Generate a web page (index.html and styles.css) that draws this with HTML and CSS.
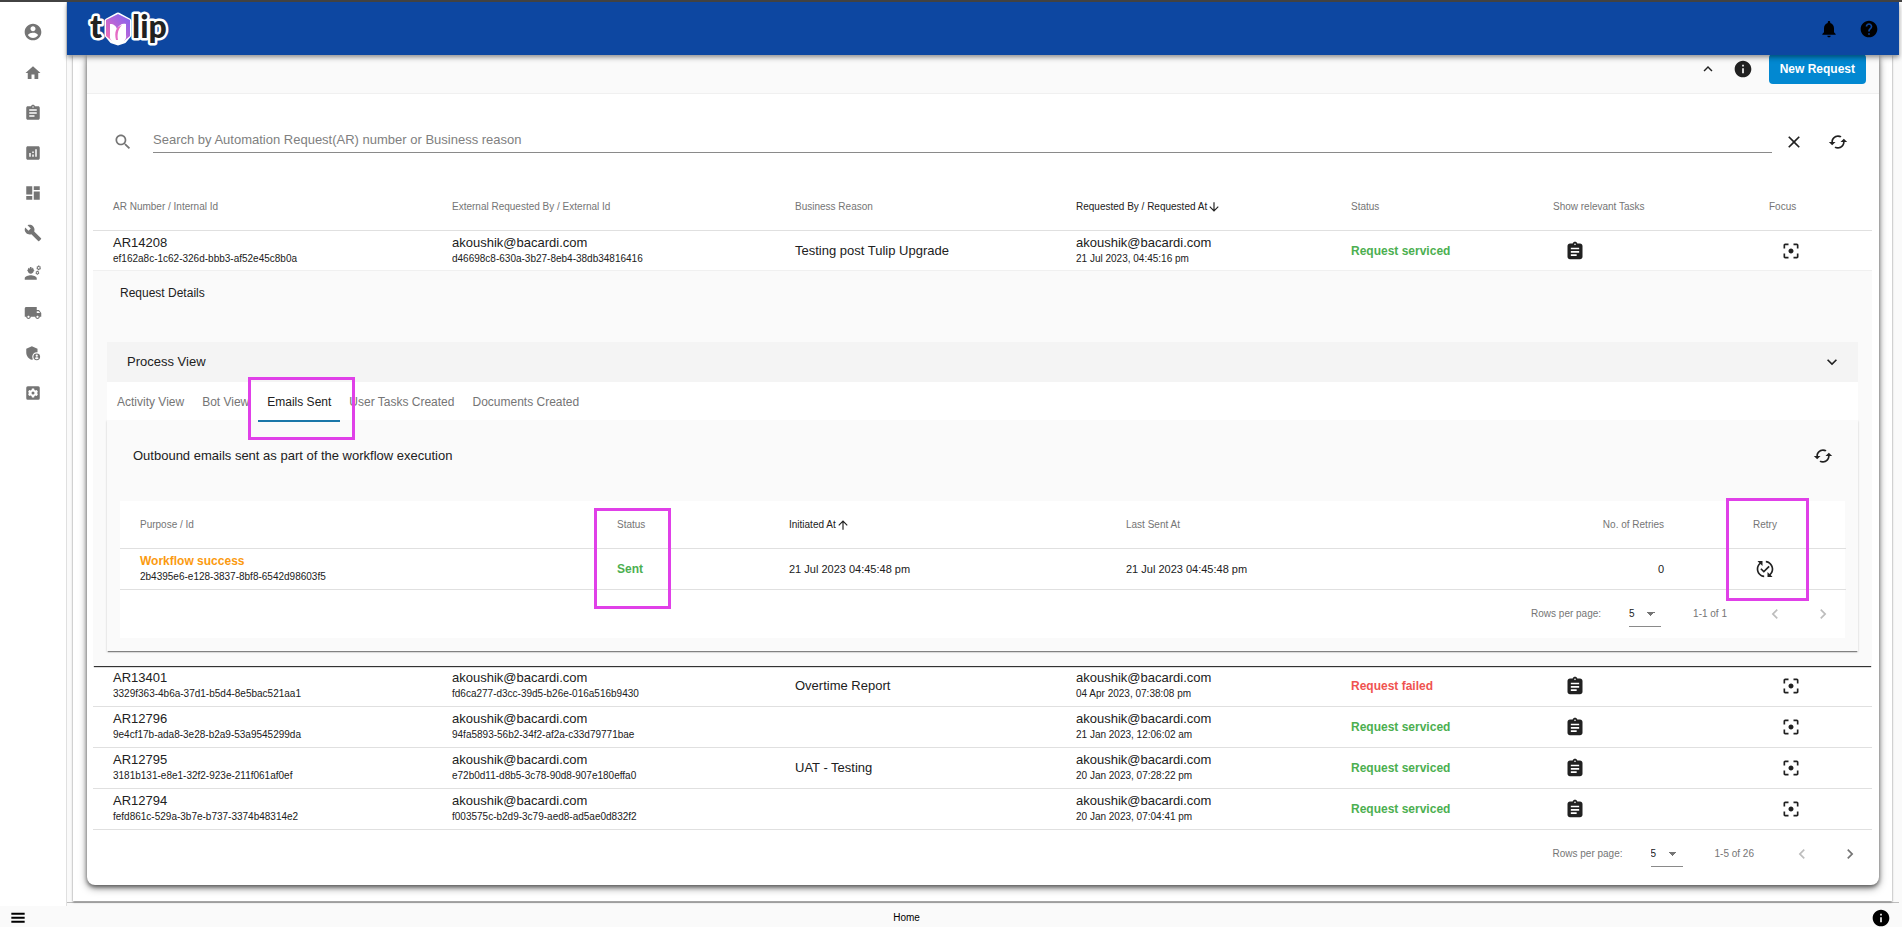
FILE: index.html
```html
<!DOCTYPE html>
<html lang="en">
<head>
    <meta charset="UTF-8">
    <meta name="viewport" content="width=device-width, initial-scale=1.0">
    <title>Tulip - Home</title>
    <link rel="stylesheet" href="styles.css">
</head>
<body>
    <svg class="sprite" aria-hidden="true">
        <symbol id="i-account" viewBox="0 0 24 24"><path d="M12 2C6.48 2 2 6.48 2 12s4.48 10 10 10 10-4.480 10-10S17.520 2 12 2zm0 3c1.660 0 3 1.340 3 3s-1.340 3-3 3-3-1.340-3-3 1.340-3 3-3zm0 14.200c-2.500 0-4.710-1.280-6-3.220.030-1.990 4-3.080 6-3.080 1.990 0 5.970 1.090 6 3.080-1.290 1.940-3.500 3.220-6 3.220z"/></symbol>
        <symbol id="i-home" viewBox="0 0 24 24"><path d="M10 20v-6h4v6h5v-8h3L12 3 2 12h3v8z"/></symbol>
        <symbol id="i-clipboard" viewBox="0 0 24 24"><path d="M19 3h-4.180C14.400 1.840 13.300 1 12 1s-2.400.840-2.820 2H5c-1.100 0-2 .9-2 2v14c0 1.100.9 2 2 2h14c1.100 0 2-.9 2-2V5c0-1.100-.9-2-2-2zm-7 0c.55 0 1 .45 1 1s-.45 1-1 1-1-.45-1-1 .45-1 1-1zm2 14H7v-2h7v2zm3-4H7v-2h10v2zm0-4H7V7h10v2z"/></symbol>
        <symbol id="i-tasks" viewBox="0 0 24 24"><path d="M18 3h-3.180C14.400 1.840 13.300 1 12 1s-2.400.840-2.820 2H6C4.300 3 3 4.300 3 6v13c0 1.700 1.300 3 3 3h12c1.700 0 3-1.300 3-3V6c0-1.700-1.300-3-3-3zm-6 0c.55 0 1 .45 1 1s-.45 1-1 1-1-.45-1-1 .45-1 1-1zm2 15H7v-2h7v2zm3-4H7v-2h10v2zm0-4H7V8h10v2z"/></symbol>
        <symbol id="i-analytics" viewBox="0 0 24 24"><path d="M19 3H5c-1.100 0-2 .9-2 2v14c0 1.100.9 2 2 2h14c1.100 0 2-.9 2-2V5c0-1.100-.9-2-2-2zM9 17H7v-5h2v5zm4 0h-2v-3h2v3zm0-5h-2v-2h2v2zm4 5h-2V7h2v10z"/></symbol>
        <symbol id="i-dashboard" viewBox="0 0 24 24"><path d="M3 14h8V3H3v11zm0 7h8v-5H3v5zm10 0h8V10h-8v11zm0-18v5h8V3h-8z"/></symbol>
        <symbol id="i-wrench" viewBox="0 0 24 24"><path d="M22.700 19l-9.100-9.100c.9-2.300.4-5-1.500-6.900-2-2-5-2.400-7.400-1.300L9 6 6 9 1.600 4.700C.4 7.100.9 10.100 2.900 12.100c1.900 1.900 4.600 2.400 6.900 1.500l9.100 9.100c.4.4 1 .4 1.400 0l2.300-2.300c.5-.4.5-1.100.1-1.400z"/></symbol>
        <symbol id="i-engineer" viewBox="0 0 24 24"><path d="M9 15c-2.670 0-8 1.340-8 4v2h16v-2c0-2.660-5.330-4-8-4zM4.740 9H5c0 2.210 1.790 4 4 4s4-1.790 4-4h.26c.27 0 .49-.22.49-.49v-.02c0-.27-.22-.49-.49-.49H13c0-1.480-.81-2.750-2-3.450v.95c0 .28-.22.5-.5.5s-.5-.22-.5-.5V4.140C9.680 4.060 9.350 4 9 4s-.68.060-1 .140V5.500c0 .28-.22.5-.5.5S7 5.780 7 5.500v-.95C5.810 5.250 5 6.520 5 8h-.26c-.27 0-.49.22-.49.49v.03c0 .26.22.48.49.48z"/><path fill-rule="evenodd" d="M18.800 2h1.600l.3 1.200 1.100-.3.8 1.400-.9.800.9.900-.8 1.300-1.100-.3-.3 1.300h-1.600l-.3-1.300-1.100.3-.8-1.300.9-.9-.9-.8.800-1.400 1.100.3zm.8 1.900a1.250 1.250 0 1 0 0 2.500 1.250 1.250 0 0 0 0-2.500zM17.200 9h1.400l.2 1 .9-.3.700 1.200-.7.700.7.700-.7 1.200-.9-.3-.2 1h-1.400l-.2-1-.9.300-.7-1.200.7-.7-.7-.7.700-1.200.9.300zm.7 1.700a1 1 0 1 0 0 2 1 1 0 0 0 0-2z"/></symbol>
        <symbol id="i-truck" viewBox="0 0 24 24"><path d="M20 8h-3V4H3c-1.100 0-2 .9-2 2v11h2c0 1.660 1.340 3 3 3s3-1.340 3-3h6c0 1.660 1.340 3 3 3s3-1.340 3-3h2v-5l-3-4zM6 18.500c-.83 0-1.500-.67-1.500-1.500s.67-1.500 1.500-1.500 1.500.67 1.500 1.500-.67 1.500-1.500 1.500zm13.500-9l1.960 2.500H17V9.500h2.500zm-1.500 9c-.83 0-1.500-.67-1.500-1.500s.67-1.500 1.500-1.500 1.500.67 1.500 1.500-.67 1.500-1.500 1.500z"/></symbol>
        <symbol id="i-shield" viewBox="0 0 24 24"><path d="M17 11c.34 0 .67.040 1 .09V6.270L10.500 3 3 6.270v4.910c0 4.540 3.200 8.790 7.500 9.820.55-.13 1.080-.32 1.600-.55-.69-.98-1.100-2.170-1.100-3.450 0-3.310 2.690-6 6-6z"/><path fill-rule="evenodd" d="M17 12.500a4.500 4.500 0 1 0 0 9 4.500 4.500 0 0 0 0-9zm0 1.500a1.500 1.500 0 1 1 0 3 1.500 1.500 0 0 1 0-3zm0 6.200c-1 0-1.900-.5-2.500-1.300.1-.8 1.700-1.200 2.500-1.200s2.400.4 2.500 1.200c-.6.8-1.500 1.300-2.500 1.300z"/></symbol>
        <symbol id="i-settings" viewBox="0 0 24 24"><path fill-rule="evenodd" d="M5 3h14a2 2 0 0 1 2 2v14a2 2 0 0 1-2 2H5a2 2 0 0 1-2-2V5a2 2 0 0 1 2-2zm5.500 3-.4 1.900-1.300.8-1.900-.6-1.500 2.600 1.500 1.300-1.500 1.300 1.500 2.600 1.900-.6 1.300.8.400 1.900h3l.4-1.900 1.300-.8 1.900.6 1.500-2.600-1.500-1.300 1.500-1.300-1.500-2.600-1.900.6-1.300-.8-.4-1.900zM12 10a2 2 0 1 1 0 4 2 2 0 0 1 0-4z"/></symbol>
        <symbol id="i-bell" viewBox="0 0 24 24"><path d="M12 22c1.100 0 2-.9 2-2h-4c0 1.100.89 2 2 2zm6-6v-5c0-3.070-1.640-5.640-4.500-6.320V4c0-.83-.67-1.500-1.500-1.500s-1.500.67-1.500 1.500v.68C7.630 5.360 6 7.920 6 11v5l-2 2v1h16v-1l-2-2z"/></symbol>
        <symbol id="i-help" viewBox="0 0 24 24"><path d="M12 2C6.480 2 2 6.480 2 12s4.480 10 10 10 10-4.480 10-10S17.520 2 12 2zm1 17h-2v-2h2v2zm2.070-7.750l-.9.920C13.450 12.900 13 13.500 13 15h-2v-.5c0-1.100.45-2.100 1.170-2.830l1.240-1.260c.37-.36.59-.86.59-1.410 0-1.100-.9-2-2-2s-2 .9-2 2H8c0-2.210 1.790-4 4-4s4 1.790 4 4c0 .88-.36 1.680-.93 2.250z"/></symbol>
        <symbol id="i-info" viewBox="0 0 24 24"><path d="M12 2C6.480 2 2 6.480 2 12s4.480 10 10 10 10-4.480 10-10S17.520 2 12 2zm1 15h-2v-6h2v6zm0-8h-2V7h2v2z"/></symbol>
        <symbol id="i-up" viewBox="0 0 24 24"><path d="M12 8l-6 6 1.410 1.410L12 10.830l4.590 4.580L18 14z"/></symbol>
        <symbol id="i-down" viewBox="0 0 24 24"><path d="M16.590 8.590L12 13.170 7.410 8.590 6 10l6 6 6-6z"/></symbol>
        <symbol id="i-left" viewBox="0 0 24 24"><path d="M15.410 7.410L14 6l-6 6 6 6 1.410-1.410L10.830 12z"/></symbol>
        <symbol id="i-right" viewBox="0 0 24 24"><path d="M10 6L8.590 7.410 13.170 12l-4.580 4.590L10 18l6-6z"/></symbol>
        <symbol id="i-search" viewBox="0 0 24 24"><path d="M15.500 14h-.79l-.28-.27C15.410 12.590 16 11.110 16 9.500 16 5.910 13.090 3 9.500 3S3 5.910 3 9.500 5.910 16 9.500 16c1.610 0 3.090-.59 4.230-1.570l.27.28v.79l5 4.990L20.490 19l-4.990-5zm-6 0C7.010 14 5 11.990 5 9.500S7.010 5 9.500 5 14 7.010 14 9.500 11.990 14 9.500 14z"/></symbol>
        <symbol id="i-close" viewBox="0 0 24 24"><path d="M19 6.410L17.590 5 12 10.590 6.410 5 5 6.410 10.590 12 5 17.590 6.410 19 12 13.410 17.590 19 19 17.590 13.410 12z"/></symbol>
        <symbol id="i-cached" viewBox="0 0 24 24"><path d="M19 8l-4 4h3c0 3.310-2.690 6-6 6-1.010 0-1.970-.25-2.800-.7l-1.460 1.460C8.970 19.540 10.430 20 12 20c4.420 0 8-3.580 8-8h3l-4-4zM6 12c0-3.310 2.690-6 6-6 1.010 0 1.970.25 2.800.7l1.460-1.460C15.030 4.460 13.570 4 12 4c-4.420 0-8 3.580-8 8H1l4 4 4-4H6z"/></symbol>
        <symbol id="i-focus" viewBox="0 0 24 24"><path d="M5 15H3v4c0 1.100.9 2 2 2h4v-2H5v-4zM5 5h4V3H5c-1.100 0-2 .9-2 2v4h2V5zm14-2h-4v2h4v4h2V5c0-1.100-.9-2-2-2zm0 16h-4v2h4c1.100 0 2-.9 2-2v-4h-2v4zM12 9c-1.660 0-3 1.340-3 3s1.340 3 3 3 3-1.340 3-3-1.340-3-3-3z"/></symbol>
        <symbol id="i-retry" viewBox="0 0 24 24"><path d="M17.660 9.530l-7.070 7.070-4.240-4.240 1.410-1.410 2.830 2.830 5.660-5.660 1.410 1.410zM4 12c0-2.330 1.020-4.420 2.620-5.880L9 8.500v-6H3l2.200 2.200C3.240 6.520 2 9.110 2 12c0 5.190 3.950 9.450 9 9.950v-2.020c-3.940-.49-7-3.860-7-7.930zm18 0c0-5.190-3.950-9.450-9-9.950v2.020c3.940.49 7 3.860 7 7.930 0 2.330-1.020 4.420-2.620 5.880L15 15.500v6h6l-2.200-2.200c1.960-1.820 3.200-4.410 3.200-7.300z"/></symbol>
        <symbol id="i-arrow-down" viewBox="0 0 24 24"><path d="M20 12l-1.410-1.410L13 16.170V4h-2v12.170l-5.580-5.590L4 12l8 8 8-8z"/></symbol>
        <symbol id="i-arrow-up" viewBox="0 0 24 24"><path d="M4 12l1.410 1.410L11 7.830V20h2V7.830l5.580 5.590L20 12l-8-8-8 8z"/></symbol>
        <symbol id="i-menu" viewBox="0 0 24 24"><path d="M2 19h20v-3H2v3zm0-6h20v-3H2v3zm0-9v3h20V4H2z"/></symbol>
    </svg>

    <div class="layout">
        <nav class="sidebar" aria-label="Main">
            <a href="#" aria-label="Account"><svg class="icon icon-lg"><use href="#i-account"/></svg></a>
            <a href="#" aria-label="Home"><svg class="icon"><use href="#i-home"/></svg></a>
            <a href="#" aria-label="Requests"><svg class="icon"><use href="#i-clipboard"/></svg></a>
            <a href="#" aria-label="Analytics"><svg class="icon"><use href="#i-analytics"/></svg></a>
            <a href="#" aria-label="Dashboard"><svg class="icon"><use href="#i-dashboard"/></svg></a>
            <a href="#" aria-label="Tools"><svg class="icon"><use href="#i-wrench"/></svg></a>
            <a href="#" aria-label="Engineering"><svg class="icon"><use href="#i-engineer"/></svg></a>
            <a href="#" aria-label="Shipping"><svg class="icon"><use href="#i-truck"/></svg></a>
            <a href="#" aria-label="Administration"><svg class="icon"><use href="#i-shield"/></svg></a>
            <a href="#" aria-label="Settings"><svg class="icon"><use href="#i-settings"/></svg></a>
        </nav>

        <div class="main">
            <header class="topbar">
                <a href="#" class="logo" aria-label="Tulip">
                    <svg viewBox="0 0 90 50" width="90" height="50">
                        <defs>
                            <linearGradient id="petal" x1="0" y1="1" x2="1" y2="0">
                                <stop offset="0" stop-color="#ff6fb0"/>
                                <stop offset="0.5" stop-color="#b565d8"/>
                                <stop offset="1" stop-color="#7d63f2"/>
                            </linearGradient>
                        </defs>
                        <g class="logo-text">
                            <text x="3" y="34">t</text>
                            <text x="45" y="34">lip</text>
                        </g>
                        <path d="M31 11l11 6v14l-5 6-6 2-6-2-5-6V17z" fill="#fff" stroke="#fff" stroke-width="5" stroke-linejoin="round"/>
                        <path d="M31 10l12 6v16l-6 5H25l-6-5V16z" fill="url(#petal)"/>
                        <path d="M23 20c4 0 6 2 7 5 2-4 5-6 9-5v11c1 5-3 8-8 9-5-1-9-4-8-9z" fill="#fff"/>
                        <path d="M29 36c-2-8 0-13 6-15-4 4-5 9-4 15z" fill="#e56bc4"/>
                    </svg>
                </a>
                <div class="topbar-actions">
                    <button class="icon-btn" aria-label="Notifications"><svg class="icon icon-lg"><use href="#i-bell"/></svg></button>
                    <button class="icon-btn" aria-label="Help"><svg class="icon icon-lg"><use href="#i-help"/></svg></button>
                </div>
            </header>

            <div class="page">
                <div class="page-inner">
                    <section class="card">
                        <div class="card-header">
                            <button class="icon-btn" aria-label="Collapse"><svg class="icon"><use href="#i-up"/></svg></button>
                            <button class="icon-btn" aria-label="Information"><svg class="icon icon-lg"><use href="#i-info"/></svg></button>
                            <button class="new-request">New Request</button>
                        </div>

                        <div class="search">
                            <label for="search-input" aria-label="Search"><svg class="icon icon-lg"><use href="#i-search"/></svg></label>
                            <input type="text" id="search-input" placeholder="Search by Automation Request(AR) number or Business reason">
                            <button class="icon-btn" aria-label="Clear"><svg class="icon icon-lg"><use href="#i-close"/></svg></button>
                            <button class="icon-btn refresh" aria-label="Refresh"><svg class="icon icon-lg"><use href="#i-cached"/></svg></button>
                        </div>

                        <table class="requests">
                            <colgroup>
                                <col class="c-ar"><col class="c-ext"><col class="c-reason"><col class="c-by"><col class="c-status"><col class="c-tasks"><col class="c-focus">
                            </colgroup>
                            <thead>
                                <tr>
                                    <th>AR Number / Internal Id</th>
                                    <th>External Requested By / External Id</th>
                                    <th>Business Reason</th>
                                    <th class="sorted">Requested By / Requested At<svg class="icon icon-sort"><use href="#i-arrow-down"/></svg></th>
                                    <th>Status</th>
                                    <th>Show relevant Tasks</th>
                                    <th>Focus</th>
                                </tr>
                            </thead>
                            <tbody>
                                <tr class="expanded">
                                    <td>AR14208<small>ef162a8c-1c62-326d-bbb3-af52e45c8b0a</small></td>
                                    <td>akoushik@bacardi.com<small>d46698c8-630a-3b27-8eb4-38db34816416</small></td>
                                    <td>Testing post Tulip Upgrade</td>
                                    <td>akoushik@bacardi.com<small>21 Jul 2023, 04:45:16 pm</small></td>
                                    <td class="ok">Request serviced</td>
                                    <td><button class="icon-btn row-btn" aria-label="Tasks"><svg class="icon icon-lg"><use href="#i-tasks"/></svg></button></td>
                                    <td><button class="icon-btn row-btn" aria-label="Focus"><svg class="icon icon-lg"><use href="#i-focus"/></svg></button></td>
                                </tr>
                                <tr class="details-row">
                                    <td colspan="7">
                                        <div class="details">
                                            <h2>Request Details</h2>
                                            <div class="process-view">
                                                <h3>Process View</h3>
                                                <button class="icon-btn" aria-label="Expand"><svg class="icon icon-lg"><use href="#i-down"/></svg></button>
                                            </div>
                                            <div class="tabs" role="tablist">
                                                <button role="tab">Activity View</button>
                                                <button role="tab">Bot View</button>
                                                <button role="tab" class="active" aria-selected="true">Emails Sent<span class="highlight highlight-tab"></span></button>
                                                <button role="tab">User Tasks Created</button>
                                                <button role="tab">Documents Created</button>
                                            </div>
                                            <div class="emails">
                                                <div class="emails-header">
                                                    <h3>Outbound emails sent as part of the workflow execution</h3>
                                                    <button class="icon-btn" aria-label="Refresh"><svg class="icon icon-lg"><use href="#i-cached"/></svg></button>
                                                </div>
                                                <div class="emails-table">
                                                    <table>
                                                        <colgroup>
                                                            <col class="e-purpose"><col class="e-status"><col class="e-date"><col class="e-date"><col class="e-retries"><col class="e-retry">
                                                        </colgroup>
                                                        <thead>
                                                            <tr>
                                                                <th>Purpose / Id</th>
                                                                <th>Status<span class="highlight highlight-status"></span></th>
                                                                <th class="sorted">Initiated At<svg class="icon icon-sort"><use href="#i-arrow-up"/></svg></th>
                                                                <th>Last Sent At</th>
                                                                <th class="num">No. of Retries</th>
                                                                <th class="center">Retry<span class="highlight highlight-retry"></span></th>
                                                            </tr>
                                                        </thead>
                                                        <tbody>
                                                            <tr>
                                                                <td><span class="purpose">Workflow success</span><small>2b4395e6-e128-3837-8bf8-6542d98603f5</small></td>
                                                                <td class="ok">Sent</td>
                                                                <td class="date">21 Jul 2023 04:45:48 pm</td>
                                                                <td class="date">21 Jul 2023 04:45:48 pm</td>
                                                                <td class="num date">0</td>
                                                                <td class="center"><button class="icon-btn" aria-label="Retry"><svg class="icon icon-lg"><use href="#i-retry"/></svg></button></td>
                                                            </tr>
                                                        </tbody>
                                                    </table>
                                                    <div class="pagination">
                                                        <label for="email-rows">Rows per page:</label>
                                                        <select id="email-rows"><option>5</option><option>10</option></select>
                                                        <span class="range">1-1 of 1</span>
                                                        <button class="icon-btn" aria-label="Previous page" disabled><svg class="icon icon-lg"><use href="#i-left"/></svg></button>
                                                        <button class="icon-btn" aria-label="Next page" disabled><svg class="icon icon-lg"><use href="#i-right"/></svg></button>
                                                    </div>
                                                </div>
                                            </div>
                                        </div>
                                    </td>
                                </tr>
                                <tr>
                                    <td>AR13401<small>3329f363-4b6a-37d1-b5d4-8e5bac521aa1</small></td>
                                    <td>akoushik@bacardi.com<small>fd6ca277-d3cc-39d5-b26e-016a516b9430</small></td>
                                    <td>Overtime Report</td>
                                    <td>akoushik@bacardi.com<small>04 Apr 2023, 07:38:08 pm</small></td>
                                    <td class="failed">Request failed</td>
                                    <td><button class="icon-btn row-btn" aria-label="Tasks"><svg class="icon icon-lg"><use href="#i-tasks"/></svg></button></td>
                                    <td><button class="icon-btn row-btn" aria-label="Focus"><svg class="icon icon-lg"><use href="#i-focus"/></svg></button></td>
                                </tr>
                                <tr>
                                    <td>AR12796<small>9e4cf17b-ada8-3e28-b2a9-53a9545299da</small></td>
                                    <td>akoushik@bacardi.com<small>94fa5893-56b2-34f2-af2a-c33d79771bae</small></td>
                                    <td></td>
                                    <td>akoushik@bacardi.com<small>21 Jan 2023, 12:06:02 am</small></td>
                                    <td class="ok">Request serviced</td>
                                    <td><button class="icon-btn row-btn" aria-label="Tasks"><svg class="icon icon-lg"><use href="#i-tasks"/></svg></button></td>
                                    <td><button class="icon-btn row-btn" aria-label="Focus"><svg class="icon icon-lg"><use href="#i-focus"/></svg></button></td>
                                </tr>
                                <tr>
                                    <td>AR12795<small>3181b131-e8e1-32f2-923e-211f061af0ef</small></td>
                                    <td>akoushik@bacardi.com<small>e72b0d11-d8b5-3c78-90d8-907e180effa0</small></td>
                                    <td>UAT - Testing</td>
                                    <td>akoushik@bacardi.com<small>20 Jan 2023, 07:28:22 pm</small></td>
                                    <td class="ok">Request serviced</td>
                                    <td><button class="icon-btn row-btn" aria-label="Tasks"><svg class="icon icon-lg"><use href="#i-tasks"/></svg></button></td>
                                    <td><button class="icon-btn row-btn" aria-label="Focus"><svg class="icon icon-lg"><use href="#i-focus"/></svg></button></td>
                                </tr>
                                <tr>
                                    <td>AR12794<small>fefd861c-529a-3b7e-b737-3374b48314e2</small></td>
                                    <td>akoushik@bacardi.com<small>f003575c-b2d9-3c79-aed8-ad5ae0d832f2</small></td>
                                    <td></td>
                                    <td>akoushik@bacardi.com<small>20 Jan 2023, 07:04:41 pm</small></td>
                                    <td class="ok">Request serviced</td>
                                    <td><button class="icon-btn row-btn" aria-label="Tasks"><svg class="icon icon-lg"><use href="#i-tasks"/></svg></button></td>
                                    <td><button class="icon-btn row-btn" aria-label="Focus"><svg class="icon icon-lg"><use href="#i-focus"/></svg></button></td>
                                </tr>
                            </tbody>
                        </table>
                        <div class="pagination card-pagination">
                            <label for="request-rows">Rows per page:</label>
                            <select id="request-rows"><option>5</option><option>10</option></select>
                            <span class="range">1-5 of 26</span>
                            <button class="icon-btn" aria-label="Previous page" disabled><svg class="icon icon-lg"><use href="#i-left"/></svg></button>
                            <button class="icon-btn" aria-label="Next page"><svg class="icon icon-lg"><use href="#i-right"/></svg></button>
                        </div>
                    </section>
                </div>
            </div>
        </div>
    </div>

    <footer class="footer">
        <button class="icon-btn" aria-label="Menu"><svg class="icon icon-menu"><use href="#i-menu"/></svg></button>
        <a href="#">Home</a>
        <button class="icon-btn" aria-label="Information"><svg class="icon icon-lg"><use href="#i-info"/></svg></button>
    </footer>
</body>
</html>
```

FILE: styles.css
```css
* {
    box-sizing: border-box;
}
body {
    margin: 0;
    min-height: 100vh;
    display: flex;
    flex-direction: column;
    font-family: "Liberation Sans", Arial, sans-serif;
    font-size: 12px;
    line-height: 16px;
    color: #212121;
    background-color: #fafafa;
    border-top: 2px solid #424242;
}
button,
input,
select {
    font-family: inherit;
    font-size: inherit;
    color: inherit;
}
h2,
h3 {
    margin: 0;
    font-size: 12px;
    font-weight: normal;
}
h3 {
    font-size: 13px;
}
.sprite {
    display: none;
}
.icon {
    display: block;
    width: 18px;
    height: 18px;
    fill: currentColor;
}
.icon-lg {
    width: 20px;
    height: 20px;
}
.icon-btn {
    display: flex;
    align-items: center;
    justify-content: center;
    padding: 0;
    border: none;
    background: none;
    cursor: pointer;
}
.icon-btn:disabled {
    color: #bdbdbd;
    cursor: default;
}

.layout {
    display: flex;
    flex: 1;
}
.sidebar {
    display: flex;
    flex-direction: column;
    align-items: center;
    gap: 22px;
    width: 67px;
    flex-shrink: 0;
    padding-top: 20px;
    background-color: #fff;
    border-right: 1px solid #e0e0e0;
}
.sidebar a {
    color: #757575;
}
.main {
    display: flex;
    flex-direction: column;
    flex: 1;
    min-width: 0;
    margin-bottom: 3px;
    padding-right: 3px;
}

.topbar {
    position: relative;
    z-index: 2;
    display: flex;
    align-items: center;
    justify-content: space-between;
    height: 53px;
    padding: 0 20px;
    background-color: #0d47a1;
    box-shadow: 0 2px 4px rgba(0, 0, 0, 0.3), 0 4px 5px rgba(0, 0, 0, 0.14);
}
.logo svg {
    display: block;
}
.logo-text {
    font-family: Lato, sans-serif;
    font-size: 32px;
    font-weight: 900;
    fill: #212121;
    stroke: #fff;
    stroke-width: 5px;
    stroke-linejoin: round;
    paint-order: stroke;
}
.topbar-actions {
    display: flex;
    gap: 20px;
    color: #000;
}

.page {
    flex: 1;
    padding: 0 7px 1px 6px;
    border-bottom: 1px solid #bdbdbd;
}
.page-inner {
    padding: 0 7px 8px;
    background-color: #fff;
    box-shadow: 0 1px 2px rgba(0, 0, 0, 0.5);
}
.card {
    margin: 0 6px 8px 7px;
    padding-bottom: 7px;
    background-color: #fff;
    border-radius: 0 0 8px 8px;
    box-shadow: 0 2px 4px rgba(0, 0, 0, 0.5), 0 3px 8px rgba(0, 0, 0, 0.4);
}
.card-header {
    display: flex;
    align-items: center;
    justify-content: flex-end;
    gap: 16px;
    height: 39px;
    padding: 0 13px 10px;
    background-color: #fafafa;
    border-bottom: 1px solid #f0f0f0;
}
.new-request {
    height: 30px;
    padding: 0 11px;
    border: none;
    border-radius: 4px;
    background-color: #0288d1;
    color: #fff;
    font-weight: bold;
    cursor: pointer;
}

.search {
    display: flex;
    align-items: center;
    gap: 12px;
    padding: 37px 31px 0 26px;
}
.search label {
    margin-right: 8px;
    color: #757575;
}
.search .refresh {
    margin-left: 12px;
}
.search input {
    flex: 1;
    min-width: 0;
    height: 22px;
    padding: 0 0 4px;
    border: none;
    border-bottom: 1px solid #8a8a8a;
    background: none;
    font-size: 13px;
    outline: none;
}
.search input::placeholder {
    color: #808080;
    opacity: 1;
}

table {
    width: 100%;
    table-layout: fixed;
    border-collapse: separate;
    border-spacing: 0;
}
th,
td {
    padding: 0 20px;
    text-align: left;
    border-bottom: 1px solid #e0e0e0;
}
th {
    position: relative;
    height: 48px;
    font-size: 10px;
    font-weight: normal;
    color: #757575;
    white-space: nowrap;
}
td {
    height: 41px;
    font-size: 13px;
}
td small {
    display: block;
    font-size: 10px;
    line-height: 16px;
}
.sorted {
    color: #212121;
}
.icon-sort {
    display: inline-block;
    width: 14px;
    height: 14px;
    vertical-align: middle;
}
.num {
    text-align: right;
}
.center {
    text-align: center;
}
.center .icon-btn {
    display: inline-flex;
    vertical-align: middle;
}
.ok,
.failed,
.purpose {
    font-size: 12px;
    font-weight: bold;
}
.ok {
    color: #4caf50;
}
.failed {
    color: #ef5350;
}
.purpose {
    color: #fb9a0f;
}
.date {
    font-size: 11px;
}
.requests {
    width: calc(100% - 13px);
    margin: 30px 7px 0 6px;
}
.row-btn {
    margin-left: 12px;
}
.c-ar { width: 339px; }
.c-ext { width: 343px; }
.c-reason { width: 281px; }
.c-by { width: 275px; }
.c-status { width: 202px; }
.c-tasks { width: 216px; }
.c-focus { width: 123px; }
.expanded td {
    height: 40px;
    border-bottom-color: #f0f0f0;
}
.details-row > td {
    padding: 0;
    border: none;
}

.details {
    padding: 14px 14px 15px;
    background-color: #fafafa;
    box-shadow: 0 2px 1px -1px rgba(0, 0, 0, 0.8);
}
.details h2 {
    padding: 0 13px;
}
.process-view {
    display: flex;
    align-items: center;
    justify-content: space-between;
    height: 40px;
    margin-top: 41px;
    padding: 0 16px 0 20px;
    background-color: #f4f4f4;
}
.tabs {
    position: relative;
    z-index: 1;
    display: flex;
    height: 38px;
    padding-left: 1px;
    background-color: #fff;
}
.tabs button {
    position: relative;
    height: 40px;
    padding: 2px 9px 0;
    border: none;
    border-bottom: 2px solid transparent;
    background: none;
    color: #757575;
    font-size: 12px;
    cursor: pointer;
}
.tabs .active {
    z-index: 1;
    color: #212121;
    border-bottom-color: #1976a8;
}
.emails {
    padding: 0 13px 13px;
    background-color: #fafafa;
    box-shadow: 0 2px 1px -1px rgba(0, 0, 0, 0.4), 0 1px 2px rgba(0, 0, 0, 0.2);
}
.emails-header {
    display: flex;
    align-items: center;
    justify-content: space-between;
    height: 81px;
    padding: 0 12px 10px 13px;
}
.emails-table {
    background-color: #fff;
}
.e-purpose { width: 477px; }
.e-status { width: 172px; }
.e-date { width: 337px; }
.e-retries { width: 241px; }
.e-retry { width: 162px; }

.pagination {
    display: flex;
    align-items: center;
    justify-content: flex-end;
    height: 48px;
    padding: 0 12px;
    font-size: 10px;
    color: #757575;
}
.card-pagination {
    padding-right: 19px;
}
.pagination select {
    appearance: none;
    width: 32px;
    height: 26px;
    margin: 0 32px 0 28px;
    padding: 0;
    border: none;
    border-bottom: 1px solid #8a8a8a;
    border-radius: 0;
    background-color: transparent;
    background-image: linear-gradient(45deg, transparent 50%, #757575 50%), linear-gradient(135deg, #757575 50%, transparent 50%);
    background-position: 18px 11px, 22px 11px;
    background-size: 4px 4px;
    background-repeat: no-repeat;
    color: #212121;
}
.pagination .icon-btn {
    margin-left: 28px;
}
.pagination .range {
    margin-right: 10px;
}

/* boxes that call out parts of the screen */
.highlight {
    position: absolute;
    border: 3px solid #e040e8;
    pointer-events: none;
}
.highlight-tab {
    top: -5px;
    left: -10px;
    right: -15px;
    bottom: -20px;
}
.highlight-status {
    top: 7px;
    left: -3px;
    width: 77px;
    height: 101px;
}
.highlight-retry {
    top: -3px;
    left: 42px;
    width: 83px;
    height: 103px;
}

.footer {
    display: flex;
    align-items: center;
    justify-content: space-between;
    height: 21px;
    padding: 2px 11px 0 10px;
    font-size: 10px;
    color: #000;
}
.footer a {
    margin-right: 84px;
    color: inherit;
    text-decoration: none;
}
.icon-menu {
    width: 16px;
    height: 16px;
}
```
